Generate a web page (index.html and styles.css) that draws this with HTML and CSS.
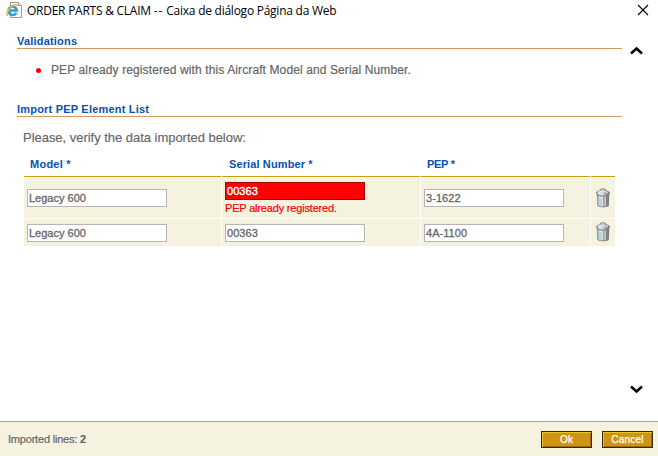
FILE: index.html
```html
<!DOCTYPE html>
<html lang="en">
<head>
<meta charset="utf-8">
<title>ORDER PARTS &amp; CLAIM</title>
<link rel="stylesheet" href="styles.css">
</head>
<body>
<svg width="0" height="0" class="defs" aria-hidden="true">
  <defs>
    <linearGradient id="metal" x1="0" x2="1" y1="0" y2="0">
      <stop offset="0" stop-color="#858585"/><stop offset=".25" stop-color="#dfe6e6"/><stop offset=".5" stop-color="#d0d4d4"/><stop offset=".7" stop-color="#a5a5a5"/><stop offset="1" stop-color="#6a6a6a"/>
    </linearGradient>
    <symbol id="trash" viewBox="0 0 16 20">
      <path d="M1.800 6h12.400l-.4 12q-5.800 2.800-11.600 0z" fill="url(#metal)"/>
      <path d="M4 10l3.500 1v7l-3.200-.5z" fill="#a9dbe0"/>
      <path d="M8.800 8v10.500M11.600 8v10" stroke="#777" stroke-width=".8" fill="none"/>
      <path d="M7.600 8v10.500M10.200 8v10.500" stroke="#eee" stroke-width=".7" fill="none"/>
      <ellipse cx="8" cy="5" rx="6.800" ry="3" fill="url(#metal)" stroke="#8c8c8c" stroke-width=".6"/>
      <path d="M3 4.500q5-3 10 0" fill="none" stroke="#e8e8e8"/>
      <path d="M5.500 2.300q0-1.500 2.500-1.500t2.500 1.500" fill="none" stroke="#888" stroke-width="1.100"/>
      <path d="M2 7q6 2.500 12 0M3 18q5 2 10 0" fill="none" stroke="#777" stroke-width=".7"/>
    </symbol>
  </defs>
</svg>
<div class="dialog">
  <header class="titlebar">
    <svg class="page-icon" width="18" height="18" viewBox="0 0 18 18">
      <path d="M4.500 1.500h8l3 3v12h-11z" fill="#fff" stroke="#999"/>
      <path d="M12.500 1.500v3h3" fill="#eee" stroke="#999"/>
      <path d="M10.300 11.800a4.200 4.200 0 1 1 .5-2.300H3.500" fill="none" stroke="#239fdc" stroke-width="2.500"/>
      <path d="M2 14.700C-.7 14 2 8.500 5.500 5.500s6.800-2.500 5.500 0" fill="none" stroke="#f4be20" stroke-width="1.600"/>
    </svg>
    <h1 class="title">ORDER PARTS &amp; CLAIM <span class="dashes">--</span> Caixa de diálogo Página da Web</h1>
    <svg class="close" width="12" height="12" viewBox="0 0 12 12"><path d="M1 1l10 10M11 1L1 11" stroke="#000" stroke-width="1.100"/></svg>
  </header>
  <div class="middle">
    <main class="content">
      <h2 class="section">Validations</h2>
      <ul class="messages"><li><i class="dot"></i><span class="message">PEP already registered with this Aircraft Model and Serial Number.</span></li></ul>
      <h2 class="section">Import PEP Element List</h2>
      <p class="intro">Please, verify the data imported below:</p>
      <div class="grid">
        <div class="th">Model *</div><div class="th th-serial">Serial Number *</div><div class="th th-pep">PEP *</div><div class="th"></div>
        <div class="td"><div class="field legacy">Legacy 600</div></div>
        <div class="td td-error"><div class="field invalid">00363</div><div class="error">PEP already registered.</div></div>
        <div class="td"><div class="field">3-1622</div></div>
        <div class="td bin"><svg width="16" height="20"><use href="#trash"/></svg></div>
        <div class="td"><div class="field legacy">Legacy 600</div></div>
        <div class="td"><div class="field">00363</div></div>
        <div class="td"><div class="field">4A-1100</div></div>
        <div class="td bin bin-last"><svg width="16" height="20"><use href="#trash"/></svg></div>
      </div>
    </main>
    <aside class="scroller">
      <svg width="13" height="9" viewBox="0 0 13 9"><path d="M1 7.500l5.500-5 5.500 5" fill="none" stroke="#000" stroke-width="2.500"/></svg>
      <svg width="13" height="9" viewBox="0 0 13 9"><path d="M1 1.500l5.500 5 5.500-5" fill="none" stroke="#000" stroke-width="2.500"/></svg>
    </aside>
  </div>
  <footer class="footer">
    <span class="lines">Imported lines: <b>2</b></span>
    <div class="buttons"><button>Ok</button><button>Cancel</button></div>
  </footer>
</div>
</body>
</html>
```
FILE: styles.css
```css
* { box-sizing: border-box; }
body { margin: 0; background: #fff; font-family: "Liberation Sans", Arial, sans-serif; color: #666; }
.defs { display: block; height: 0; }
.dialog { width: 658px; height: 456px; display: flex; flex-direction: column; overflow: hidden; }
.titlebar { height: 22px; display: flex; align-items: flex-start; padding: 1px 9px 0 6px; flex: none; }
.page-icon { flex: none; }
.title { margin: 2px 0 0 3px; font: 12px/16px "Open Sans", "Noto Sans", sans-serif; color: #000; white-space: nowrap; letter-spacing: -0.25px; }
.dashes { letter-spacing: 1px; }
.close { margin: 3px 0 0 auto; }
.middle { flex: 1; display: flex; }
.content { width: 605px; margin-left: 17px; padding-top: 11px; }
.section { margin: 0; height: 16px; border-bottom: 1px solid #d39a5c; font-size: 11px; line-height: 16px; font-weight: bold; color: #0b4fb3; letter-spacing: 0.2px; white-space: nowrap; }
.messages { list-style: none; margin: 0; padding: 13px 0 0 19px; height: 52px; }
.messages li { display: flex; align-items: center; line-height: 16px; font-size: 12px; white-space: nowrap; }
.message { letter-spacing: 0.11px; -webkit-text-stroke: 0.2px; }
.dot { width: 5px; height: 5px; border-radius: 50%; background: #f00; margin-right: 10px; }
.intro { margin: 12px 0 0 6px; font-size: 13px; line-height: 18px; letter-spacing: -0.03px; white-space: nowrap; -webkit-text-stroke: 0.15px; }
.grid { margin: 5px 0 0 7px; width: 591px; display: grid; grid-template-columns: 197px 198px 169px 24px; grid-template-rows: 25px 40px 27px; column-gap: 1px; row-gap: 1px; }
.th { border-bottom: 1px solid #cf9b0b; height: 25px; padding-left: 6px; font-size: 11px; line-height: 24px; font-weight: bold; color: #0b4fb3; letter-spacing: 0.25px; white-space: nowrap; }
.th-serial { padding-left: 7px; letter-spacing: 0.12px; }
.th-pep { letter-spacing: -0.3px; }
.td { background: #f5f3e0; display: flex; flex-direction: column; justify-content: center; padding-left: 3px; }
.td-error { padding-top: 2px; }
.bin { align-items: center; padding: 0; }
.bin-last { padding-bottom: 2px; }
.field { width: 140px; height: 18px; border: 1px solid #b5b5b5; background: #fff; font-size: 11px; line-height: 17px; padding-left: 1px; letter-spacing: 0.05px; white-space: nowrap; -webkit-text-stroke: 0.3px; }
.legacy { letter-spacing: 0; }
.invalid { background: #f00; border-color: #a00; color: #fff; -webkit-text-stroke: 0.4px; }
.error { color: #f00; font-size: 11px; line-height: 15px; margin-top: 1px; letter-spacing: -0.18px; white-space: nowrap; -webkit-text-stroke: 0.2px; }
.scroller { width: 13px; margin-left: 8px; padding: 24px 0 27px; display: flex; flex-direction: column; justify-content: space-between; }
.footer { height: 35px; flex: none; border-top: 1px solid #cf9a66; background: #f5f3e0; display: flex; align-items: center; justify-content: space-between; padding: 0 5px 0 8px; font-size: 11px; letter-spacing: -0.2px; }
.lines { -webkit-text-stroke: 0.2px; }
.buttons { display: flex; gap: 10px; padding-top: 1px; }
button { width: 51px; height: 17px; margin: 0; padding: 0; border: 1px solid #3a2a00; background: #cf9316; color: #fff; font: 10px/13px "Liberation Sans", Arial, sans-serif; letter-spacing: 0.2px; -webkit-text-stroke: 0.25px; box-shadow: inset 1px 1px #e8c52a, inset -1px -1px #9a6a08; }
```
